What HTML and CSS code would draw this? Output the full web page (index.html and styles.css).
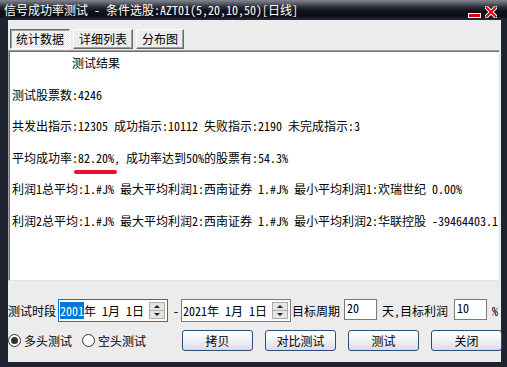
FILE: index.html
```html
<!DOCTYPE html>
<html>
<head>
<meta charset="utf-8">
<link rel="stylesheet" href="styles.css">
</head>
<body>
<div class="window">
  <div class="titlebar">
    <span class="title">信号成功率测试 - 条件选股:AZT01(5,20,10,50)[日线]</span>
    <span class="tb-min"></span>
    <svg class="tb-close" width="12" height="12" viewBox="0 0 12 12"><path d="M1.5 1.5 L10.5 10.5 M10.5 1.5 L1.5 10.5" stroke="#fff" stroke-width="4" stroke-linecap="square"/><path d="M1.5 1.5 L10.5 10.5 M10.5 1.5 L1.5 10.5" stroke="#e00010" stroke-width="2" stroke-linecap="square"/></svg>
  </div>
  <div class="client">
    <div class="tabs">
      <div class="tab active">统计数据</div>
      <div class="tab">详细列表</div>
      <div class="tab">分布图</div>
    </div>
    <div class="panel">
      <div class="line">          测试结果</div>
      <div class="line">测试股票数:4246</div>
      <div class="line">共发出指示:12305 成功指示:10112 失败指示:2190 未完成指示:3</div>
      <div class="line">平均成功率:82.20%, 成功率达到50%的股票有:54.3%<span class="mark"></span></div>
      <div class="line">利润1总平均:1.#J% 最大平均利润1:西南证券 1.#J% 最小平均利润1:欢瑞世纪 0.00%</div>
      <div class="line">利润2总平均:1.#J% 最大平均利润2:西南证券 1.#J% 最小平均利润2:华联控股 -39464403.1</div>
    </div>
    <div class="row1">
      <span class="lbl">测试时段</span>
      <div class="date focus"><span class="sel">2001</span>年 1月 1日<span class="spin"><span class="up"></span><span class="dn"></span></span></div>
      <span class="dash">-</span>
      <div class="date date2">2021年 1月 1日<span class="spin"><span class="up"></span><span class="dn"></span></span></div>
      <span class="lbl l2">目标周期</span>
      <div class="edit">20</div>
      <span class="lbl l3">天,目标利润</span>
      <div class="edit e2">10</div>
      <span class="lbl l4">%</span>
    </div>
    <div class="row2">
      <span class="radio on"></span><span class="rlbl">多头测试</span>
      <span class="radio r2"></span><span class="rlbl">空头测试</span>
      <div class="btn b1">拷贝</div>
      <div class="btn">对比测试</div>
      <div class="btn">测试</div>
      <div class="btn">关闭</div>
    </div>
  </div>
</div>
</body>
</html>
```

FILE: styles.css
```css
* { box-sizing: border-box; }
html, body { margin: 0; padding: 0; }
body {
  width: 507px; height: 367px; overflow: hidden;
  font-family: "Noto Sans Mono CJK SC", "Noto Sans CJK SC", monospace;
  font-size: 12px;
}
.window {
  width: 507px; height: 367px;
  background: #1f2330;
  display: flex; flex-direction: column;
}
.titlebar {
  height: 20px; flex: none;
  display: flex; align-items: center;
  background: linear-gradient(#82858f 0px, #60636e 3px, #2c2e36 7px, #111218 11px, #0c0d12 16px, #252a3a 20px);
  color: #fff;
  padding-left: 4px;
}
.title { font-size: 12px; line-height: 14px; margin-top: -1px; white-space: pre; }
.tb-min {
  margin-left: auto; width: 11px; height: 3px;
  background: #e00010; outline: 1px solid #fff;
  align-self: flex-end; margin-bottom: 3px; margin-right: 5px;
}
.tb-close { margin-right: 10px; margin-top: 3px; }
.client {
  flex: 1;
  margin: 0 6px 5px 8px;
  background: #ececec;
  display: flex; flex-direction: column;
  position: relative;
}
.tabs { display: flex; gap: 3px; padding: 9px 0 0 2px; height: 30px; }
.tab {
  height: 20px; padding: 0 5px;
  line-height: 18px; text-align: center;
  border: 1px solid; border-color: #fff #6a6a6a #6a6a6a #fff;
  box-shadow: inset -1px -1px 0 #a0a0a0;
  background: #ececec;
}
.tab.active {
  border-color: #6a6a6a #fff #fff #6a6a6a;
  box-shadow: inset 1px 1px 0 #a0a0a0;
  background: repeating-conic-gradient(#ffffff 0 25%, #e4e4e4 0 50%) 0 0 / 2px 2px;
}
.panel {
  position: relative;
  height: 231px; margin-right: 1px;
  background: #fff;
  border-top: 1px solid #a0a0a0; border-left: 1px solid #a0a0a0;
  border-right: 1px solid #e4e4e4; border-bottom: 1px solid #e4e4e4;
  box-shadow: inset 1px 1px 0 #6e6e6e;
  padding: 4px 0 0 3px;
}
.line { height: 31.5px; line-height: 16px; white-space: pre; color: #000; }
.mark {
  position: absolute; left: 65px; top: 119px;
  width: 43px; height: 4px; border-radius: 2px;
  background: #e8102c;
}
.row1 {
  display: flex; align-items: center;
  margin-top: 18px; height: 23px;
}
.row1 > *, .row2 > * { flex: none; white-space: pre; }
.date {
  position: relative;
  width: 110px; height: 23px; margin-left: 2px;
  border: 1px solid #7a7a7a; background: #fff;
  padding-left: 1px; line-height: 21px;
}
.date.focus { border-color: #0078d7; }
.sel { background: #0078d7; color: #fff; }
.spin {
  position: absolute; right: 2px; top: 2px;
  width: 16px; height: 17px;
  border: 1px solid #adadad; background: #e4e4e4;
  display: flex; flex-direction: column;
}
.spin .up, .spin .dn { flex: 1; position: relative; }
.spin .up { border-bottom: 1px solid #adadad; }
.spin .up::after, .spin .dn::after {
  content: ""; position: absolute; left: 4px; top: 2px;
  border-left: 3px solid transparent; border-right: 3px solid transparent;
}
.spin .up::after { border-bottom: 3px solid #222; }
.spin .dn::after { border-top: 3px solid #222; }
.dash { margin-left: 5px; width: 8px; }
.date2 { margin-left: 0; }
.l2 { margin-left: 1px; }
.edit {
  width: 33px; height: 21px; margin-left: 4px;
  border: 1px solid #7a7a7a; background: #fff;
  padding: 1px 0 0 2px; line-height: 14px; align-self: flex-start;
}
.l3 { margin-left: 5px; }
.e2 { margin-left: 6px; }
.l4 { margin-left: 5px; }
.row2 {
  display: flex; align-items: center;
  margin-top: 8px; height: 21px;
}
.radio {
  width: 13px; height: 13px; border-radius: 50%;
  border: 1px solid #333; background: #fff;
  position: relative; margin-right: 3px;
}
.radio.on::after {
  content: ""; position: absolute; left: 2px; top: 2px;
  width: 7px; height: 7px; border-radius: 50%; background: #333;
}
.r2 { margin-left: 10px; }
.btn {
  width: 71px; height: 21px; margin-left: 12px;
  border: 1px solid #2b4d78; border-radius: 3px;
  background: linear-gradient(#ffffff, #f4f5fa 40%, #d9dbe8);
  text-align: center; line-height: 19px;
}
.btn.b1 { margin-left: 36px; }
```
